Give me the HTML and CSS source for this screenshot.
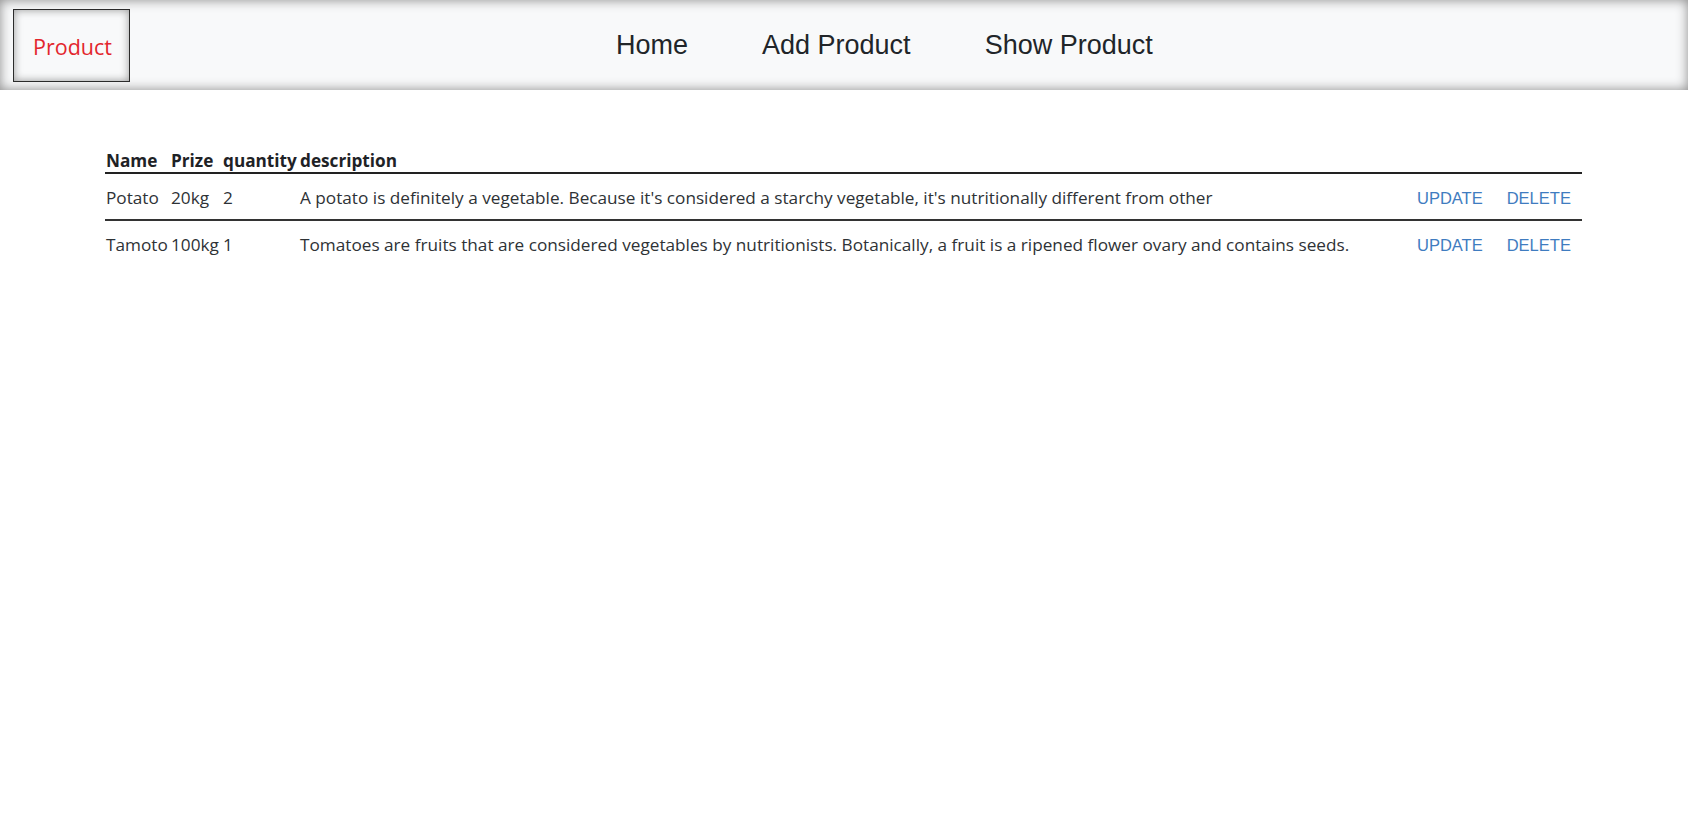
FILE: index.html
```html
<!DOCTYPE html>
<html lang="en">
<head>
<meta charset="utf-8">
<title>Product</title>
<link rel="stylesheet" href="styles.css">
</head>
<body>
<nav class="navbar">
  <a class="brand" href="#">Product</a>
  <ul class="nav-links">
    <li><a href="#">Home</a></li>
    <li><a href="#">Add Product</a></li>
    <li><a href="#">Show Product</a></li>
  </ul>
</nav>
<main class="content">
  <table class="products">
    <colgroup>
      <col class="c-name">
      <col class="c-prize">
      <col class="c-qty">
      <col class="c-desc">
      <col class="c-actions">
    </colgroup>
    <thead>
      <tr>
        <th>Name</th>
        <th>Prize</th>
        <th>quantity</th>
        <th>description</th>
        <th></th>
      </tr>
    </thead>
    <tbody>
      <tr>
        <td>Potato</td>
        <td>20kg</td>
        <td>2</td>
        <td>A potato is definitely a vegetable. Because it's considered a starchy vegetable, it's nutritionally different from other</td>
        <td class="actions"><button class="btn">UPDATE</button><button class="btn">DELETE</button></td>
      </tr>
      <tr>
        <td>Tamoto</td>
        <td>100kg</td>
        <td>1</td>
        <td>Tomatoes are fruits that are considered vegetables by nutritionists. Botanically, a fruit is a ripened flower ovary and contains seeds.</td>
        <td class="actions"><button class="btn">UPDATE</button><button class="btn">DELETE</button></td>
      </tr>
    </tbody>
  </table>
</main>
</body>
</html>
```
FILE: styles.css
```css
html, body {
  margin: 0;
  padding: 0;
  background: #ffffff;
}

body {
  font-family: "Open Sans", "Noto Sans", sans-serif;
  color: #212529;
}

.navbar {
  display: flex;
  align-items: center;
  height: 90px;
  background: #f8f9fa;
  box-shadow: inset 0 0 12px #8a8a8a;
}

.brand {
  box-sizing: border-box;
  display: flex;
  align-items: center;
  justify-content: center;
  width: 117px;
  height: 73px;
  margin-left: 13px;
  padding-top: 2px;
  padding-left: 2px;
  border: 1px solid #2b2b2b;
  box-shadow: inset 0 0 8px #9a9a9a;
  color: #e3262d;
  font-family: "Open Sans", "Noto Sans", sans-serif;
  font-size: 21.5px;
  text-decoration: none;
}

.nav-links {
  display: flex;
  gap: 74px;
  list-style: none;
  margin: 0 0 0 486px;
  padding: 0;
}

.nav-links a {
  font-family: "Liberation Sans", Arial, sans-serif;
  font-size: 27px;
  color: #212529;
  text-decoration: none;
}

.content {
  padding: 59px 106px 0 105px;
}

.products {
  width: 100%;
  table-layout: fixed;
  border-collapse: collapse;
  font-size: 17.2px;
}

.c-name { width: 65px; }
.c-prize { width: 52px; }
.c-qty { width: 77px; }
.c-actions { width: 190px; }

.products th {
  text-align: left;
  font-weight: 700;
  padding: 0 0 0 1px;
  line-height: 23px;
  border-bottom: 2px solid #222;
  white-space: nowrap;
  color: #1e2226;
}

.products td {
  padding: 11px 0 9px 1px;
  line-height: 25px;
  white-space: nowrap;
  overflow: visible;
  color: #2e3236;
}

.products tbody tr + tr td {
  border-top: 2px solid #333;
}

.actions {
  text-align: right;
}

.products td.actions {
  padding-right: 27px;
}

.btn {
  font-family: "Liberation Sans", Arial, sans-serif;
  font-size: 16.5px;
  color: #3f7cc0;
  background: none;
  border: 0;
  padding: 0;
  margin: 0 0 0 24px;
  cursor: pointer;
}
```
